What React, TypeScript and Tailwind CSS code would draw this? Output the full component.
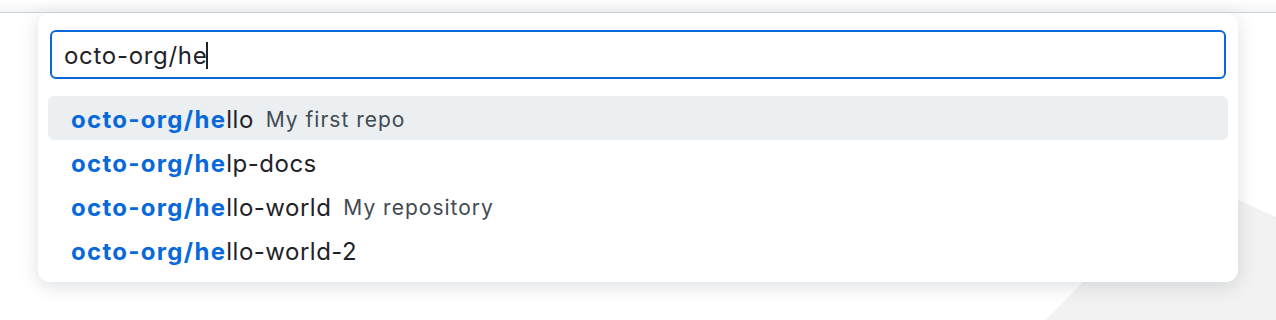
import React from 'react';

const repos = [
  { rest: 'llo', desc: 'My first repo', active: true },
  { rest: 'lp-docs', desc: '', active: false },
  { rest: 'llo-world', desc: 'My repository', active: false },
  { rest: 'llo-world-2', desc: '', active: false },
];

const App: React.FC = () => {
  return (
    <div className="relative w-[1276px] h-[320px] bg-white overflow-hidden font-['Inter',sans-serif]">
      <svg className="absolute inset-0" width="1276" height="320" viewBox="0 0 1276 320">
        <polygon points="1045,320 1188,177 1276,217 1276,320" fill="#f2f2f2" />
      </svg>

      <div className="relative h-[13px] bg-gradient-to-b from-white to-[#f3f4f5] border-b border-[#cfd5db]" />

      <div className="relative mx-[38px] bg-white rounded-[12px] shadow-[0_4px_18px_rgba(100,110,120,0.22)] px-[10px] pt-[17px] pb-[10px]">
        <div className="mx-[2px] h-[49px] border-2 border-[#0969da] rounded-[6px] flex items-center pl-[12px] pt-[2px]">
          <span className="text-[24px] text-[#1f2328] tracking-[0.7px]">octo-org/he</span>
          <span className="-ml-[1px] w-[2px] h-[27px] bg-[#1f2328]" />
        </div>

        <div className="mt-[17px] flex flex-col">
          {repos.map((r, i) => (
            <div
              key={i}
              className={`h-[44px] rounded-[6px] flex items-center pl-[23px] pt-[3px] gap-[12px] ${r.active ? 'bg-[#ebeff1]' : ''}`}
            >
              <span className="text-[24px] text-[#1f2328] tracking-[0.5px]">
                <span className="font-bold text-[#0969da] tracking-[1.3px]">octo-org/he</span>
                {r.rest}
              </span>
              {r.desc && <span className="text-[21px] text-[#424a53] tracking-[1px]">{r.desc}</span>}
            </div>
          ))}
        </div>
      </div>
    </div>
  );
};

export default App;
